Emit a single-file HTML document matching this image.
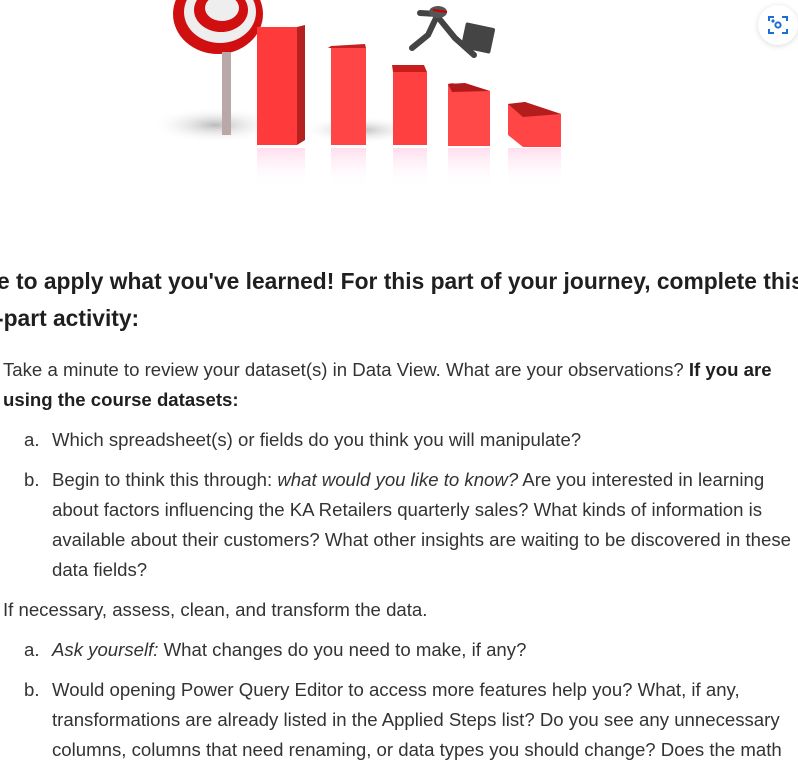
<!DOCTYPE html>
<html><head><style>
body{margin:0;width:798px;height:755px;overflow:hidden;background:#fff;font-family:"Liberation Sans",sans-serif;color:#333;position:relative}
.t{position:absolute;white-space:nowrap;font-size:18.6px;line-height:30px;letter-spacing:0px}
.h{position:absolute;white-space:nowrap;font-weight:bold;font-size:22.8px;color:#1f1f1f;letter-spacing:0px}
b{color:#1f1f1f}
</style></head><body>
<svg width="798" height="230" style="position:absolute;left:0;top:0">
<defs>
<radialGradient id="sh" cx="0.5" cy="0.5" r="0.5"><stop offset="0" stop-color="#bbb"/><stop offset="1" stop-color="#fff" stop-opacity="0"/></radialGradient>
<linearGradient id="rf" x1="0" y1="0" x2="0" y2="1"><stop offset="0" stop-color="#fbd" stop-opacity=".5"/><stop offset="1" stop-color="#fff" stop-opacity="0"/></linearGradient>
</defs>
<ellipse cx="215" cy="125" rx="65" ry="18" fill="url(#sh)"/>
<ellipse cx="360" cy="130" rx="60" ry="14" fill="url(#sh)"/>
<ellipse cx="218" cy="14" rx="45" ry="40" fill="#d01010"/>
<ellipse cx="220" cy="12" rx="36" ry="31" fill="#eee"/>
<ellipse cx="221" cy="10" rx="27" ry="22" fill="#d01010"/>
<ellipse cx="222" cy="8" rx="17" ry="13" fill="#eee"/>
<rect x="222" y="52" width="9" height="83" fill="#b8a8a8"/>
<rect x="257" y="27" width="40" height="118" fill="#ff3a3a"/><polygon points="297,27 305,25 305,140 297,145" fill="#b52020"/>
<rect x="257" y="148" width="48" height="40" fill="url(#rf)"/>
<rect x="331" y="48" width="35" height="97" fill="#ff4545"/><polygon points="328,48 331,46 365,44 366,48" fill="#c62020"/>
<rect x="331" y="148" width="35" height="40" fill="url(#rf)"/>
<rect x="393" y="72" width="34" height="73" fill="#ff4040"/><polygon points="392,65 424,65 427,72 393,72" fill="#c81d1d"/>
<rect x="393" y="148" width="34" height="40" fill="url(#rf)"/>
<polygon points="448,84 452,83 490,91 490,146 448,146" fill="#ff4848"/><polygon points="448,84 465,83 490,91 452,92" fill="#b01a1a"/>
<rect x="448" y="148" width="42" height="40" fill="url(#rf)"/>
<polygon points="508,104 525,102 561,114 561,147 523,147 508,135" fill="#ff4545"/><polygon points="508,104 525,102 561,114 523,117" fill="#b51c1c"/>
<rect x="508" y="148" width="53" height="40" fill="url(#rf)"/>
<g stroke="#444" stroke-width="6" stroke-linecap="round" fill="none">
<path d="M437 16 L428 35 L412 48"/>
<path d="M437 16 L455 38 L474 55"/>
<path d="M437 14 L420 13"/>
</g>
<ellipse cx="438" cy="12" rx="9" ry="6" fill="#555"/>
<path d="M433 10 L447 12" stroke="#c00" stroke-width="2"/>
<rect x="463" y="25" width="30" height="26" rx="2" fill="#444" transform="rotate(12 478 38)"/>
</svg>
<div style="position:absolute;left:758px;top:5px;width:40px;height:40px;border-radius:50%;background:#fff;box-shadow:0 1px 6px rgba(0,0,0,.15)"></div>
<svg width="22" height="22" style="position:absolute;left:767px;top:14px" viewBox="0 0 22 22" fill="none" stroke="#1a6fd6" stroke-width="2"><path d="M2 7V3h5M15 3h5v4M20 15v4h-5M7 19H2v-4"/><circle cx="11" cy="11" r="2.6"/><circle cx="6" cy="7" r=".6" fill="#1a6fd6"/></svg>

<div class="h" style="left:-3px;top:268px">e to apply what you've learned! For this part of your journey, complete this</div>
<div class="h" style="left:-4px;top:305px">-part activity:</div>

<div class="t" style="left:3px;top:355px">Take a minute to review your dataset(s) in Data View. What are your observations? <b>If you are</b></div>
<div class="t" style="left:3px;top:385px"><b>using the course datasets:</b></div>
<div class="t" style="left:24px;top:425px">a.</div><div class="t" style="left:52px;top:425px">Which spreadsheet(s) or fields do you think you will manipulate?</div>
<div class="t" style="left:24px;top:465px">b.</div><div class="t" style="left:52px;top:465px">Begin to think this through: <i>what would you like to know?</i> Are you interested in learning</div>
<div class="t" style="left:52px;top:495px">about factors influencing the KA Retailers quarterly sales? What kinds of information is</div>
<div class="t" style="left:52px;top:525px">available about their customers? What other insights are waiting to be discovered in these</div>
<div class="t" style="left:52px;top:555px">data fields?</div>
<div class="t" style="left:3px;top:595px">If necessary, assess, clean, and transform the data.</div>
<div class="t" style="left:24px;top:635px">a.</div><div class="t" style="left:52px;top:635px"><i>Ask yourself:</i> What changes do you need to make, if any?</div>
<div class="t" style="left:24px;top:675px">b.</div><div class="t" style="left:52px;top:675px">Would opening Power Query Editor to access more features help you? What, if any,</div>
<div class="t" style="left:52px;top:705px">transformations are already listed in the Applied Steps list? Do you see any unnecessary</div>
<div class="t" style="left:52px;top:735px">columns, columns that need renaming, or data types you should change? Does the math</div>
</body></html>
